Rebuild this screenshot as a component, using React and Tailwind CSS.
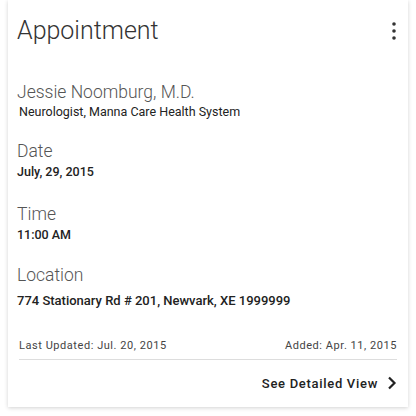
import React from 'react';

const Field = ({ label, value, valueClass = 'text-[12.5px]' }) => (
    <div className="flex flex-col">
        <span className="text-[17.5px] font-light text-[#555] leading-[22px]">{label}</span>
        <span className={`${valueClass} font-medium text-[#222] leading-[18px] mt-[1px]`}>{value}</span>
    </div>
);

const App = () => {
    return (
        <div className="w-[416px] h-[416px] bg-white font-['Roboto',sans-serif]">
            <div className="ml-[8px] w-[400px] h-[407px] bg-white shadow-[0_1px_4px_rgba(0,0,0,0.18)] flex flex-col px-[9px]">
                {/* header */}
                <div className="flex items-start justify-between pt-[14px]">
                    <h1 className="text-[25px] font-light text-[#333] leading-[34px]">Appointment</h1>
                    <svg width="6" height="20" viewBox="0 0 6 20" className="mt-[7px] mr-[2px]">
                        <circle cx="3" cy="3" r="1.8" fill="#333" />
                        <circle cx="3" cy="10" r="1.8" fill="#333" />
                        <circle cx="3" cy="17" r="1.8" fill="#333" />
                    </svg>
                </div>

                <div className="flex flex-col mt-[33px]">
                    <span className="text-[17.5px] font-light text-[#555] leading-[22px]">Jessie Noomburg, M.D.</span>
                    <span className="text-[12.5px] text-[#222] leading-[18px] ml-[2px]">Neurologist, Manna Care Health System</span>
                </div>

                <div className="mt-[19px]">
                    <Field label="Date" value="July, 29, 2015" />
                </div>
                <div className="mt-[22px]">
                    <Field label="Time" value="11:00 AM" />
                </div>
                <div className="mt-[20px]">
                    <Field label="Location" value="774 Stationary Rd # 201, Newvark, XE 1999999" valueClass="text-[13px] mt-[6px]" />
                </div>

                {/* footer */}
                <div className="mt-auto mx-[2px] flex justify-between text-[11px] text-[#444] tracking-[0.55px] pb-[4px] border-b border-[#ddd]">
                    <span>Last Updated: Jul. 20, 2015</span>
                    <span>Added: Apr. 11, 2015</span>
                </div>
                <div className="flex justify-end items-center gap-[9px] pt-[14px] pb-[14px] pr-[2px]">
                    <span className="text-[13px] font-medium text-[#222] tracking-[0.7px]">See Detailed View</span>
                    <svg width="10" height="14" viewBox="0 0 10 14">
                        <path d="M2 1.5 L7.5 7 L2 12.5" fill="none" stroke="#222" strokeWidth="2.2" />
                    </svg>
                </div>
            </div>
        </div>
    );
};

export default App;
